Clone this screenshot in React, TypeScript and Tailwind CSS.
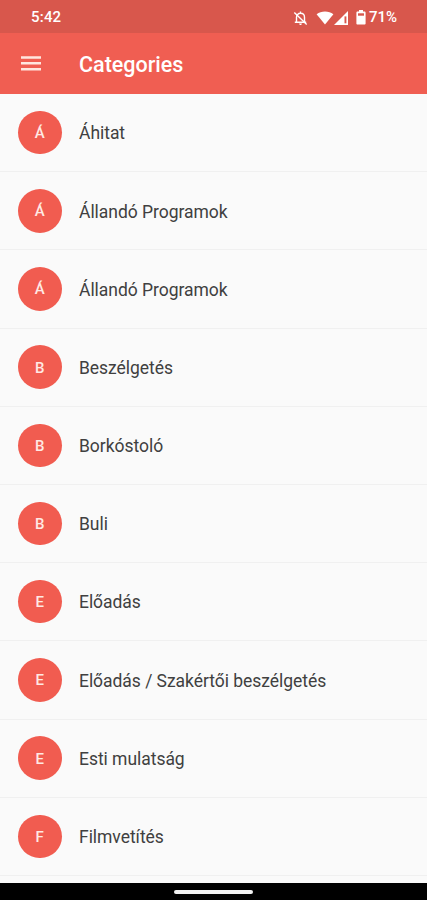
const categories = [
  "Áhitat",
  "Állandó Programok",
  "Állandó Programok",
  "Beszélgetés",
  "Borkóstoló",
  "Buli",
  "Előadás",
  "Előadás / Szakértői beszélgetés",
  "Esti mulatság",
  "Filmvetítés",
];

function StatusBar() {
  return (
    <div className="flex h-[33px] items-center bg-[#d8574c] pt-[2px] pr-[30px] pl-[31px] text-white">
      <span className="text-[15px] leading-none font-medium tracking-[0.2px]">
        5:42
      </span>

      <div className="ml-auto flex items-center">
        {/* notifications muted */}
        <svg viewBox="0 0 14 16" className="mr-[8px] h-4 w-[15px]" fill="none">
          <path
            d="M3 12V7.3C3 4.9 4.7 3.3 7 3.3s4 1.6 4 4V12M1.3 12.3h11.4M7 1.6v1.8"
            stroke="currentColor"
            strokeWidth="1.4"
          />
          <path d="M5.6 13.4h2.8c0 .9-.6 1.5-1.4 1.5s-1.4-.6-1.4-1.5z" fill="currentColor" />
          <path d="M.8 2.4l12.4 12.2" stroke="currentColor" strokeWidth="1.4" />
        </svg>
        {/* wifi */}
        <svg viewBox="0 0 18 14" className="h-[14px] w-[18px]" fill="currentColor">
          <path d="M9 13.4L.6 3.3C3 1.5 5.8.6 9 .6s6 .9 8.4 2.7z" />
        </svg>
        {/* mobile signal */}
        <svg viewBox="0 0 15 14" className="h-[14px] w-[15px]" fill="currentColor">
          <path d="M14 0v14H0z" />
          <path d="M10.5 5.4h1.9v6.9h-1.9z" fill="#d8574c" />
        </svg>
        {/* battery */}
        <svg viewBox="0 0 10 15" className="mr-[3px] ml-[7px] h-[15px] w-[10px]" fill="currentColor">
          <path d="M3 0h4v1.6h1.4c.7 0 1.2.5 1.2 1.2v10.6c0 .7-.5 1.2-1.2 1.2H1.6c-.7 0-1.2-.5-1.2-1.2V2.8c0-.7.5-1.2 1.2-1.2H3z" />
          <path d="M2 3.3h6v2.4H2z" fill="#d8574c" />
        </svg>
        <span className="text-[15px] leading-none font-medium">71%</span>
      </div>
    </div>
  );
}

function AppBar() {
  return (
    <header className="flex h-[61px] items-center bg-[#f05e52] text-white">
      <button aria-label="Menu" className="ml-[21px]">
        <svg viewBox="0 0 20 15" className="h-[15px] w-5" fill="#ffe6df">
          <path d="M0 .3h20v2.5H0zM0 6.1h20v2.5H0zM0 11.9h20v2.5H0z" />
        </svg>
      </button>
      <h1 className="ml-[38px] pt-[3px] text-[21.5px] leading-none font-medium">
        Categories
      </h1>
    </header>
  );
}

function CategoryRow({ name }: { name: string }) {
  return (
    <li className="flex h-[78.2px] items-center border-b border-[#f0f0f0] pl-[18px]">
      <div className="flex size-[43.5px] items-center justify-center rounded-full bg-[#f15c50] pt-[2px] text-[15px] leading-none font-medium text-[#ffe9e4]">
        {name[0]}
      </div>
      <span className="ml-[17.5px] pt-[3px] text-[17.5px] leading-none tracking-[-0.04px] text-[#404040]">
        {name}
      </span>
    </li>
  );
}

export default function App() {
  return (
    <div className="flex h-[900px] w-[427px] flex-col overflow-hidden bg-[#fafafa] font-['Roboto',sans-serif]">
      <StatusBar />
      <AppBar />
      <ul className="min-h-0 flex-1 overflow-hidden">
        {categories.map((name, i) => (
          <CategoryRow key={i} name={name} />
        ))}
      </ul>
      <div className="flex h-[17px] items-center justify-center bg-black pt-px">
        <div className="h-[4px] w-[79px] rounded-full bg-[#f2f2f2]" />
      </div>
    </div>
  );
}
